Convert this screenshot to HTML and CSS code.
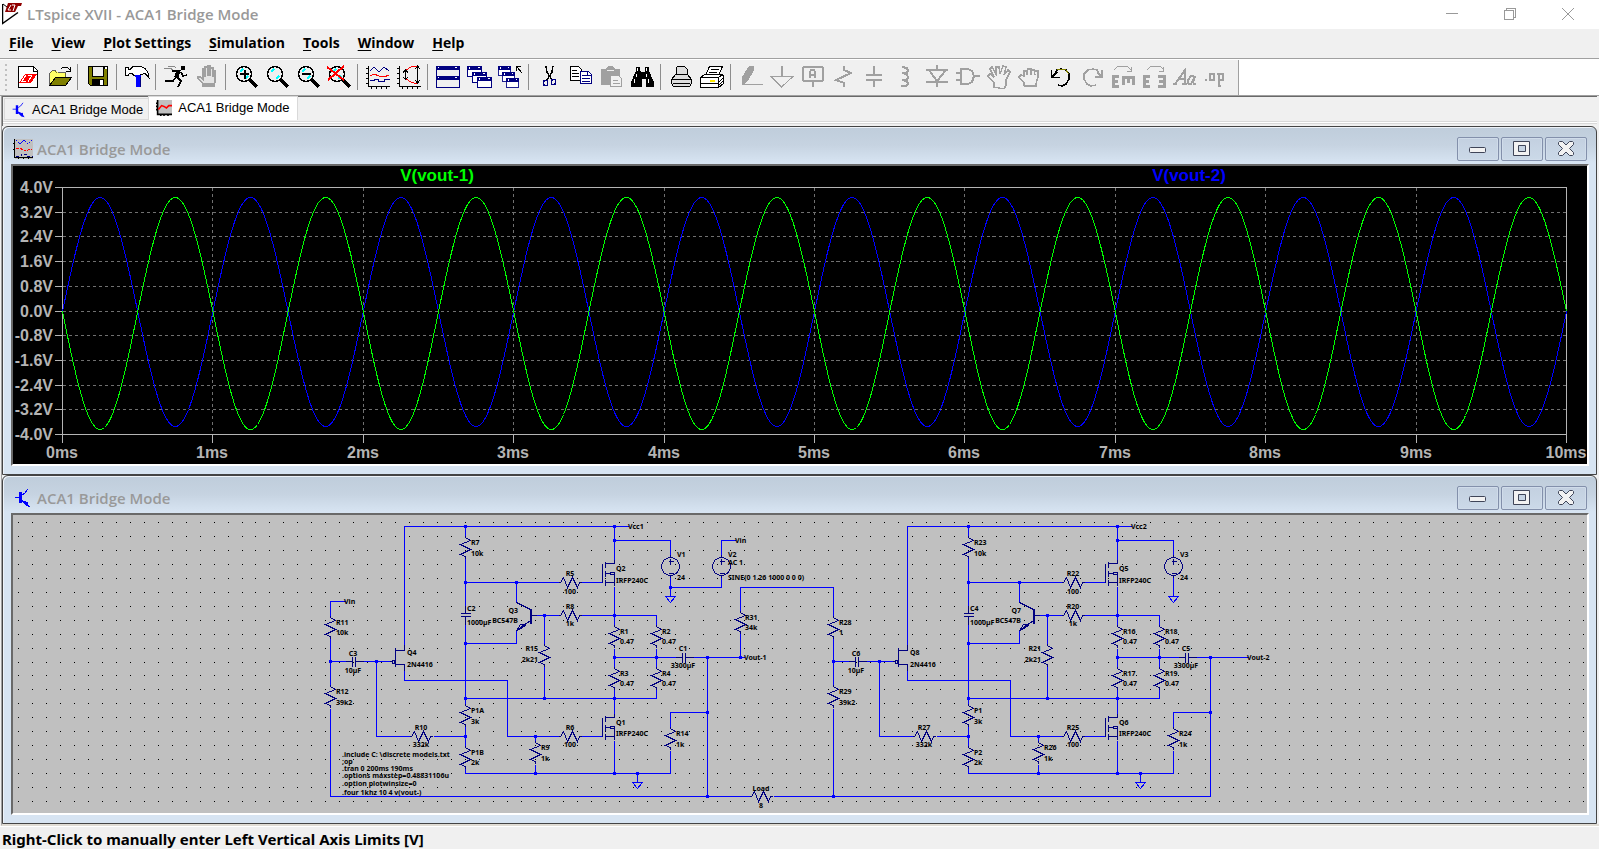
FILE: index.html
```html
<!DOCTYPE html>
<html lang="en">
<head>
<meta charset="utf-8">
<title>LTspice XVII - ACA1 Bridge Mode</title>
<link rel="stylesheet" href="styles.css">
</head>
<body>
<svg class="defs" aria-hidden="true">
  <symbol id="i-transistor" viewBox="0 0 20 20"><path d="M2 9h5M9 7l3-2 3-4" fill="none" stroke="#00f" stroke-width="1"/><path d="M6 4h3v11H6zM9 12l5 2 1-1v3l2 3-4-1-4-4z" fill="#00f"/></symbol>
  <symbol id="i-wave" viewBox="0 0 20 20"><path fill="#c0c0c0" d="M2 0h18v18H2z"/><path d="M2 0v18H20M0 4h2M0 8h2M0 12h2M6 18v2M10 18v2M15 18v2" fill="none" stroke="#000" stroke-width="2"/><path d="M3 12l4-5 3 1 3 2 3-3h4" fill="none" stroke="#f00" stroke-width="2"/></symbol>
  <symbol id="i-plot" viewBox="0 0 20 20"><path fill="#c0c0c0" d="M2 0h18v20H2z"/><path d="M1.500 0v18.500H20M0 4.500h2M0 10.500h2M5.500 18v2M10.500 18v2M15.500 18v2" fill="none" stroke="#000"/><path d="M3 1l4 4 4-4 4 4 4-4" fill="none" stroke="#00f" stroke-dasharray="2 1"/><path d="M3 10l3-1 5 2 4 0 4-1" fill="none" stroke="#f00" stroke-dasharray="3 1"/><path d="M3 17h5v-2h5v2h7" fill="none" stroke="#000080" stroke-dasharray="3 2"/></symbol>
  <symbol id="i-lens" viewBox="0 0 25 24"><circle cx="10" cy="9" r="7.500" fill="#f0f0f0" stroke="#000" stroke-width="1.500"/><path d="M6 7l3-3M11 14l3-3" stroke="#0ff" stroke-width="2" fill="none"/><path d="M15 14l8 8" stroke="#000" stroke-width="4"/></symbol>
  <symbol id="i-win" viewBox="0 0 15 11"><path d="M.5.500h14v10H.500z" fill="#fff" stroke="#000080"/><path d="M0 0h15v4H0z" fill="#000080"/><path d="M2 1h1v2H2zM11 1h2v1h-2z" fill="#fff"/></symbol>
  <symbol id="b-min" viewBox="0 0 18 16"><rect x=".5" y="6.500" width="16" height="5" rx="1" fill="#f2f2f2" stroke="#3f4558"/></symbol>
  <symbol id="b-max" viewBox="0 0 18 16"><path d="M.500.500h16v14h-16zM5.500 4.500v6h7v-6z" fill="#f2f2f2" fill-rule="evenodd" stroke="#3f4558"/></symbol>
  <symbol id="b-close" viewBox="0 0 18 16"><path d="M2.500.500H5.500L9 4l3.500-3.500h3l1 1v2L12.500 7.500l4 4v2l-1 1h-3L9 11l-3.500 3.500h-3l-1-1v-2l4-4-4-4v-2z" fill="#f2f2f2" stroke="#3f4558"/></symbol>
</svg>

<header class="titlebar">
  <svg class="logo" viewBox="0 0 20 22"><path d="M.5 1v19.500L16 9.500" fill="none" stroke="#000" stroke-width="1.500"/><path d="M1 1l4 3" stroke="#000"/><path d="M6 0h14l-1 3h-3l-3 6H3z" fill="#900000"/><path d="M9 2L6 7h3M10 2h3l-2 6" stroke="#fff" fill="none" stroke-width="1"/></svg>
  <h1 class="app-title">LTspice XVII - ACA1 Bridge Mode</h1>
  <div class="sys">
    <button type="button" aria-label="Minimize"><svg viewBox="0 0 12 12"><path d="M0 5.500h12"/></svg></button>
    <button type="button" aria-label="Restore"><svg viewBox="0 0 12 12"><path d="M.5 2.500h9v9h-9zM2.500 2.500v-2h9v9h-2"/></svg></button>
    <button type="button" aria-label="Close"><svg viewBox="0 0 12 12"><path d="M0 0l12 12M12 0L0 12" shape-rendering="auto"/></svg></button>
  </div>
</header>

<nav class="menu">
  <button type="button"><u>F</u>ile</button><button type="button"><u>V</u>iew</button><button type="button"><u>P</u>lot Settings</button><button type="button"><u>S</u>imulation</button><button type="button"><u>T</u>ools</button><button type="button"><u>W</u>indow</button><button type="button"><u>H</u>elp</button>
</nav>

<div class="rebar">
<div class="toolbar" role="toolbar" aria-label="Main">
  <span class="grip"></span>
  <button type="button" aria-label="New schematic"><svg viewBox="0 0 25 24"><path d="M2.500 1.500H17.500L21.500 5.500V22.500H2.500z" fill="#fff" stroke="#000"/><path d="M17.500 1v5h4" fill="none" stroke="#000"/><path d="M3 18l6-9h12l-6 9z" fill="#f00"/><path d="M10 10l-4 6h4M12 10h4l-4 7" stroke="#fff" fill="none"/></svg></button>
  <button type="button" aria-label="Open"><svg viewBox="0 0 25 24"><path d="M2.500 20V7.500l2-2h4l2 2h8v5H9l-6 8z" fill="#ff6" stroke="#000" stroke-width=".6"/><path d="M2.500 20.500l6-8h16l-6 8z" fill="#808000" stroke="#000"/><path d="M14 4l2-2h4l3 3M23.500 2v4.500H19" fill="none" stroke="#000"/></svg></button>
  <span class="sep"></span>
  <button type="button" aria-label="Save"><svg viewBox="0 0 25 24"><path d="M2 1h20v20H4l-2-2z" fill="#000"/><path d="M3 2h3v10h12V4h3v16H4l-1-1z" fill="#808000"/><path d="M7 2h10v9H7z" fill="#efefef"/><path d="M6 14h12v7H6z" fill="#000"/><path d="M14 15h3v5h-3zM19 2h2v2h-2z" fill="#fff"/></svg></button>
  <span class="sep"></span>
  <button type="button" aria-label="Control panel"><svg viewBox="0 0 25 24"><path d="M.5 2.500h2.500v2h2l3-3h8l4 2 3 4 1 5-4-4-4 1-1 1H9L7 8.500H4.500L3 10.500H.500z" fill="#fff" stroke="#000"/><path d="M10 10h6v2h-1v10h-4V12h-1z" fill="#00f"/><path d="M15.500 12v10" stroke="#000080"/></svg></button>
  <span class="sep"></span>
  <button type="button" aria-label="Run"><svg viewBox="0 0 25 24"><path d="M17 1h4v4h-4z" fill="#000"/><path d="M15 7l-3 5-3 4H1M13 12l4 4-3 6M8 6h6M17 7l2 4 4-1" fill="none" stroke="#000" stroke-width="1.500"/><path d="M12 5h5l-2 6-2 2-3-1 2-5z" fill="#000"/><path d="M0 3h6l3 2M4 1h6l2 2" fill="none" stroke="#888"/></svg></button>
  <button type="button" aria-label="Halt" disabled><svg viewBox="0 0 25 24"><path d="M8 21v-3l-5-4v-2h3l2 2V4h2v8V2h3v9V1h2v10V3h3v9V6h2v12l-2 3z" fill="#e4e4e4" stroke="#a0a0a0" stroke-width="1.400"/><path d="M8 18h12v4H8z" fill="#a0a0a0"/></svg></button>
  <span class="sep"></span>
  <button type="button" aria-label="Zoom in"><svg viewBox="0 0 25 24"><use href="#i-lens"/><path d="M6 9h9M10.500 5v9" stroke="#000" stroke-width="2"/></svg></button>
  <button type="button" aria-label="Pan"><svg viewBox="0 0 25 24"><use href="#i-lens"/></svg></button>
  <button type="button" aria-label="Zoom out"><svg viewBox="0 0 25 24"><use href="#i-lens"/><path d="M6 9h9" stroke="#000" stroke-width="2"/></svg></button>
  <button type="button" aria-label="Zoom to fit"><svg viewBox="0 0 25 24"><use href="#i-lens"/><path d="M0 2l17 13M1 15L17 1" stroke="#f00" stroke-width="2"/></svg></button>
  <span class="sep"></span>
  <button type="button" aria-label="Autorange"><svg viewBox="0 0 25 24"><path d="M2.500 1v20.500H24M0 3.500h2M0 8.500h2M0 13.500h2M0 18.500h2M5.500 22v2M10.500 22v2M15.500 22v2M20.500 22v2" stroke="#000" fill="none"/><path d="M4 6l4-4 5 5 5-5 5 4" stroke="#000080" fill="none"/><path d="M4 11l4-2 5 2 5 1 5-2" stroke="#f00" fill="none"/><path d="M4 15.500h4v-1h4v2h6v-2h6" stroke="#000080" fill="none"/></svg></button>
  <button type="button" aria-label="Setup axis"><svg viewBox="0 0 25 24"><path d="M2.500 1v20.500H24M0 3.500h2M0 8.500h2M0 13.500h2M0 18.500h2M5.500 22v2M10.500 22v2M15.500 22v2M20.500 22v2M8.500 6v8M6 7.500l2.500-2.500L11 7.500M6 12l2.500 2.500L11 12M20.500 2v16M18 4l2.500-3L23 4M18 15l2.500 3 2.500-3" stroke="#000" fill="none"/><path d="M9 5l5-3 6-1M9 14l5 3 6 2" stroke="#f00" fill="none"/></svg></button>
  <span class="sep"></span>
  <button type="button" aria-label="Tile windows"><svg viewBox="0 0 25 24"><path d="M.500 1.500h23v21H.500z" fill="#f0f0f0" stroke="#000080"/><path d="M0 1h24v4H0zM0 11h24v4H0z" fill="#000080"/><path d="M2 2h1v1H2zM19 2h2v1h-2zM2 12h1v1H2zM19 12h2v1h-2z" fill="#fff"/></svg></button>
  <button type="button" aria-label="Cascade windows"><svg viewBox="0 0 25 24"><use href="#i-win" x="0" y="1" width="15" height="11"/><use href="#i-win" x="5" y="7" width="15" height="11"/><use href="#i-win" x="10" y="12" width="15" height="11"/></svg></button>
  <button type="button" aria-label="Close all windows"><svg viewBox="0 0 25 24"><use href="#i-win" x="0" y="1" width="13" height="10"/><use href="#i-win" x="4" y="7" width="13" height="10"/><use href="#i-win" x="8" y="13" width="13" height="10"/><path d="M18.500 6V1.500H23M19 2l5 6" stroke="#000" fill="none"/></svg></button>
  <span class="sep"></span>
  <button type="button" aria-label="Cut"><svg viewBox="0 0 25 24"><path d="M9 1l1 6 5 8M16 1l-1 6-5 8" stroke="#000" stroke-width="1.500" fill="none"/><path d="M7.500 15.500h3v5h-3l-1-1v-3zM15.500 14.500h3v4l-1 1h-3v-4z" fill="none" stroke="#000080" stroke-width="1.500"/></svg></button>
  <button type="button" aria-label="Copy"><svg viewBox="0 0 25 24"><path d="M2.500 1.500h8l3 3v11h-11z" fill="#fff" stroke="#000"/><path d="M4 5h5M4 8h7M4 11h7" stroke="#000"/><path d="M12.500 6.500h8l3 3v9h-11z" fill="#fff" stroke="#000080"/><path d="M14 10h5M14 13h8M14 16h8M19.500 7v3h4" stroke="#000080" fill="none"/></svg></button>
  <button type="button" aria-label="Paste" disabled><svg viewBox="0 0 25 24"><path d="M2 4h5l2-3h5l2 3h5v16H2z" fill="#a0a0a0"/><path d="M8 5h7" stroke="#eee"/><path d="M11.500 10.500h8l3 3v8h-11z" fill="#f0f0f0" stroke="#a0a0a0"/><path d="M14 15h5M14 18h7" stroke="#a0a0a0"/></svg></button>
  <button type="button" aria-label="Find"><svg viewBox="0 0 25 24"><path d="M6 2h4v4l1 1h3l1-1V2h4v4l5 11v5h-8v-8h-4v8H1v-5L6 6z" fill="#000"/><path d="M7 3h1v3H7zM16 3h1v3h-1zM6 9h1v3H6zM4 14h1v4H4zM18 14h1v4h-1zM16 9h1v3h-1z" fill="#fff"/></svg></button>
  <span class="sep"></span>
  <button type="button" aria-label="Print setup"><svg viewBox="0 0 25 24"><path d="M7.500 10V2.500l1-1h7l3 3V10" fill="#ddd" stroke="#000"/><path d="M2.500 14.500l4-5h12l4 5v4l-2 3h-16l-2-3z" fill="#ddd" stroke="#000"/><path d="M3 14.500h19M4 18.500h17" stroke="#000"/></svg></button>
  <button type="button" aria-label="Print"><svg viewBox="0 0 25 24"><path d="M5.500 10l4-8.500h13l-4 8.500z" fill="#fff" stroke="#000"/><path d="M11 4h8M9 7h8" stroke="#000"/><path d="M.500 12.500l4-3h18l1 2v7l-5 4H.500z" fill="#fff" stroke="#000"/><path d="M.500 12.500h18l5-4M18.500 12v10M0 18.500h18M19 17l5-5M19 20l5-5" stroke="#000" fill="none"/><path d="M10 15h5v2h-5z" fill="#ffea00"/></svg></button>
  <span class="sep"></span>
  <button type="button" aria-label="Wire" disabled><svg viewBox="0 0 25 24"><path d="M10 1h5v4L9 16l-4 3-2 1V12z" fill="#a0a0a0"/><path d="M3 19.500h21" stroke="#a0a0a0"/></svg></button>
  <button type="button" aria-label="Ground" disabled><svg class="dim" viewBox="0 0 25 24"><path d="M11.500 1v10" stroke-width="2"/><path d="M1 11.500h22L11.500 22z"/></svg></button>
  <button type="button" aria-label="Label net" disabled><svg class="dim bold" viewBox="0 0 25 24"><path d="M2 3l1-1h18l1 1v12l-1 1H3l-1-1zM12 16v6M9 13V7l1-2h3l1 2v6M9 10h5"/></svg></button>
  <button type="button" aria-label="Resistor" disabled><svg class="dim bold" viewBox="0 0 25 24"><path d="M12 1v4l7 3-15 7 8 3v4"/></svg></button>
  <button type="button" aria-label="Capacitor" disabled><svg class="dim bold" viewBox="0 0 25 24"><path d="M11 1v9M3 10h16M3 15h16M11 15v7"/></svg></button>
  <button type="button" aria-label="Inductor" disabled><svg class="dim bold" viewBox="0 0 25 24"><path d="M8 2l5 1 1 3-2 2H8M8 8l5 1 1 4-2 2H8M8 15l5 1 1 3-2 2H7"/></svg></button>
  <button type="button" aria-label="Diode" disabled><svg class="dim bold" viewBox="0 0 25 24"><path d="M12 0v5M1 5h22M4 5l8 11 9-11M1 17h22M12 17v5"/></svg></button>
  <button type="button" aria-label="Component" disabled><svg class="dim bold" viewBox="0 0 25 24"><path d="M5 4h7l4 2 2 5-2 6-4 2H5zM0 8h5M0 15h5M18 11h6"/></svg></button>
  <button type="button" aria-label="Move" disabled><svg class="dim" viewBox="0 0 25 24"><path stroke-width="1.500" d="M7 22v-4l-6-7 2-2 4 3-4-8 2-2 4 7V2h3l1 7 3-8 3 1-2 8 4-5 2 2-4 8v5l-2 4z"/></svg></button>
  <button type="button" aria-label="Drag" disabled><svg class="dim" viewBox="0 0 25 24"><path stroke-width="1.500" d="M6 21v-3l-5-6 2-2 3 1V6h3v4M9 6l1-2h3v6M13 5h3l1 5M17 6h3v6l-2 7v2H6"/></svg></button>
  <button type="button" aria-label="Undo"><svg viewBox="0 0 25 24"><path d="M5 10l3-5 4-1 5 1 3 4v5l-3 5-4 2-4-1" fill="none" stroke="#000" stroke-width="1.500"/><path d="M8 5l4-1 5 1 3 4" fill="none" stroke="#808000"/><path d="M2.500 5v8M3 12.500h8M3 12l5-5" fill="none" stroke="#000" stroke-width="1.500"/></svg></button>
  <button type="button" aria-label="Redo" disabled><svg class="dim" viewBox="0 0 25 24"><path stroke-width="1.500" d="M20 10l-3-5-4-1-5 1-4 4v5l3 5 4 2 5-1M22 5v7h-7M22 12l-5-4"/></svg></button>
  <button type="button" aria-label="Rotate" disabled><svg class="dim" viewBox="0 0 25 24"><path d="M3 5l4-4h9l4 4M20.500 2v4H16"/><path stroke-width="3" d="M8 11.500H2v10h6M2 16h5M11 12.500h13M12 13v7M17 13v5M22.500 13v7"/></svg></button>
  <button type="button" aria-label="Mirror" disabled><svg class="dim" viewBox="0 0 25 24"><path d="M5 5l4-4h9l4 4M21.500 2v4H17"/><path stroke-width="3" d="M8 11.500H2v10h6M2 16h5M16 11.500h6v10h-6M17 16h5"/></svg></button>
  <button type="button" aria-label="Text" disabled><svg class="dim bold" viewBox="0 0 25 24"><path d="M0 19h4M2 19L12 5v14M5 14h7M9 19h5M21 11h-3l-3 4v3l1 1h2l4-8-2 6 1 2h2"/></svg></button>
  <button type="button" aria-label="SPICE directive" disabled><svg class="dim bold" viewBox="0 0 25 24"><path d="M1 15h2M6 9h4v6H6zM13 9h2v13M15 9h4v6h-4M14 21h3"/></svg></button>
</div>
</div>

<div class="workspace">
  <div class="tabs" role="tablist">
    <button type="button" role="tab" class="tab"><svg class="tab-icon" viewBox="0 0 20 20"><use href="#i-transistor"/></svg>ACA1 Bridge Mode</button>
    <button type="button" role="tab" class="tab active" aria-selected="true"><svg class="tab-icon" viewBox="0 0 20 20"><use href="#i-wave"/></svg>ACA1 Bridge Mode</button>
  </div>

  <section class="child">
    <div class="child-title">
      <svg class="child-icon" viewBox="0 0 20 20"><use href="#i-plot"/></svg>
      <h2>ACA1 Bridge Mode</h2>
      <button type="button" aria-label="Minimize"><svg viewBox="0 0 18 16"><use href="#b-min"/></svg></button>
      <button type="button" aria-label="Maximize"><svg viewBox="0 0 18 16"><use href="#b-max"/></svg></button>
      <button type="button" aria-label="Close"><svg viewBox="0 0 18 16"><use href="#b-close"/></svg></button>
    </div>
    <div class="client"><svg id="plot" class="plot" viewBox="13 166 1574 298"></svg></div>
  </section>

  <section class="child">
    <div class="child-title">
      <svg class="child-icon" viewBox="0 0 20 20"><use href="#i-transistor"/></svg>
      <h2>ACA1 Bridge Mode</h2>
      <button type="button" aria-label="Minimize"><svg viewBox="0 0 18 16"><use href="#b-min"/></svg></button>
      <button type="button" aria-label="Maximize"><svg viewBox="0 0 18 16"><use href="#b-max"/></svg></button>
      <button type="button" aria-label="Close"><svg viewBox="0 0 18 16"><use href="#b-close"/></svg></button>
    </div>
    <div class="client"><svg id="schematic" class="schematic" viewBox="13 515 1574 298"></svg></div>
  </section>
</div>

<footer class="status">Right-Click to manually enter Left Vertical Axis Limits [V]</footer>
<script src="app.js"></script>
</body>
</html>
```
FILE: styles.css
```css
* { box-sizing: border-box; }
body {
  margin: 0;
  min-height: 100vh;
  display: flex;
  flex-direction: column;
  background: #f0f0f0;
  color: #000;
  font: 600 15px/20px "Open Sans", "Noto Sans", sans-serif;
  overflow: hidden;
}
button {
  margin: 0;
  padding: 0;
  border: 0;
  background: none;
  color: inherit;
  font: inherit;
}
svg { display: block; }
.defs { display: none; }

.titlebar {
  display: flex;
  align-items: center;
  height: 29px;
  padding: 0 2px 1px;
  background: #fff;
  color: #999;
}
.logo { width: 20px; height: 22px; }
.app-title { flex: 1; margin: 0 0 0 5px; font: inherit; }
.sys { display: flex; }
.sys button { width: 58px; height: 28px; display: flex; align-items: center; justify-content: center; }
.sys svg { width: 12px; height: 12px; fill: none; stroke: #999; shape-rendering: crispEdges; }

.menu {
  display: flex;
  height: 30px;
  padding-bottom: 1px;
  border-bottom: 1px solid #a0a0a0;
  font-size: 14px;
  font-weight: 700;
}
.menu button { padding: 0 9px; }
.menu u { text-underline-offset: 2px; }

.rebar {
  padding-top: 1px;
  background: #fff;
  border-bottom: 1px solid #a0a0a0;
  display: flex;
}
.toolbar {
  display: flex;
  align-items: center;
  height: 35px;
  padding: 0 6px 1px 0;
  background: #f0f0f0;
  border-right: 1px solid #a0a0a0;
}
.grip {
  width: 2px;
  height: 27px;
  margin: 0 6px 0 5px;
  background: repeating-linear-gradient(#c0c0c0 0 2px, transparent 2px 5px);
}
.sep {
  width: 8px;
  height: 26px;
  background: linear-gradient(#8d8d8d, #8d8d8d) 2px 0 / 1px 100% no-repeat;
}
.toolbar button { width: 31px; height: 30px; display: grid; place-items: center; }
.toolbar svg { width: 25px; height: 24px; shape-rendering: crispEdges; }
.dim { fill: none; stroke: #a0a0a0; stroke-width: 1px; }
.dim.bold { stroke-width: 2px; }

.workspace {
  margin: 0 0 0 1px;
  border-left: 1px solid #a0a0a0;
  padding-right: 2px;
  border-bottom: 2px solid #e0dcd4;
}
.tabs {
  display: flex;
  align-items: flex-end;
  height: 30px;
  padding: 0 0 6px 1px;
  border-top: 1px solid #696969;
  border-left: 1px solid #696969;
  background: linear-gradient(#d9d9d9, #d9d9d9) 0 24px / 100% 1px no-repeat, linear-gradient(#fff, #fff) 0 25px / 100% 1px no-repeat, linear-gradient(#d9d9d9, #d9d9d9) 0 26px / 100% 1px no-repeat;
}
.tab {
  display: flex;
  align-items: center;
  gap: 5px;
  height: 22px;
  padding: 1px 5px 0 6px;
  border: 1px solid #d9d9d9;
  border-right: 0;
  font: 13px/18px "Liberation Sans", Arial, sans-serif;
}
.tab.active {
  height: 24px;
  padding: 0 7px 2px;
  gap: 6px;
  background: #fff;
  border-bottom: 0;
  border-right: 1px solid #d9d9d9;
}
.tab-icon { width: 16px; height: 16px; }

.child {
  border: 1px solid #444;
  border-radius: 6px 6px 0 0;
  padding: 0 7px 8px 8px;
  background: linear-gradient(#bfcddb, #c6d3e1 18px, #d7e4f2 36px);
  box-shadow: inset 1px 1px 0 #eef3f9;
}
.child-title {
  display: flex;
  align-items: center;
  gap: 2px;
  height: 37px;
  padding: 7px 2px 0;
  color: #999;
}
.child-icon { width: 20px; height: 20px; shape-rendering: crispEdges; }
.child-title h2 { flex: 1; margin: 0 0 0 2px; font: inherit; }
.child-title button {
  width: 42px;
  height: 24px;
  display: grid;
  place-items: center;
  border: 1px solid #8390ab;
  border-radius: 2px;
  background: linear-gradient(#c3d0e0, #cbd9e8);
  box-shadow: inset 0 0 0 1px #d0dcea;
}
.child-title button svg { width: 18px; height: 16px; }
.client {
  border: 2px solid #fff;
  border-top-color: #696969;
  border-left-color: #696969;
}
.client > svg { width: 100%; height: auto; }

.plot { background: #000; font: bold 16px "Liberation Sans", Arial, sans-serif; }
.plot path { fill: none; shape-rendering: crispEdges; }
.plot text { fill: #b4b4b4; }
.plot .axis { stroke: #b4b4b4; }
.plot .grid { stroke: #707070; stroke-dasharray: 3 3; }
.plot .green { stroke: #0f0; }
.plot .blue { stroke: #00f; }
.plot .name { font-size: 17px; }
.plot .name.green { fill: #0f0; stroke: none; }
.plot .name.blue { fill: #00f; stroke: none; }

.schematic { background: #c0c0c0; font: bold 7px "Noto Sans", "Open Sans", sans-serif; }
.schematic path { fill: none; shape-rendering: crispEdges; }
.schematic path.wire { stroke: #00f; }
.schematic path.part { stroke: #000080; }
.schematic path.node { fill: #00f; }
.schematic path.dots { fill: #000; }
.middle { text-anchor: middle; }
.end { text-anchor: end; }

.status {
  height: 23px;
  padding: 3px 2px 0;
  border-top: 1px solid #fff;
  font: 700 15px/18px "Noto Sans", "Open Sans", sans-serif;
  white-space: nowrap;
}
```
FILE: app.js
```js
const NS = "http://www.w3.org/2000/svg";

function add(parent, tag, attrs, text) {
  const el = document.createElementNS(NS, tag);
  for (const key in attrs) el.setAttribute(key, attrs[key]);
  if (text !== undefined) el.textContent = text;
  parent.appendChild(el);
  return el;
}

/* ---- Waveform viewer ---- */
function drawPlot() {
  const svg = document.getElementById("plot");
  const L = 62, R = 1566, T = 187, B = 434, ZERO = 311;
  const lines = add(svg, "g", { transform: "translate(.5 .5)" });
  let grid = "", axis = `M${L} ${T}H${R}V${B}H${L}Z`;
  for (let i = 0; i <= 10; i++) {
    const x = Math.round(L + (R - L) * i / 10);
    const y = Math.round(T + (B - T) * i / 10);
    if (i > 0 && i < 10) grid += `M${x} ${T}V${B}M${L} ${y}H${R}`;
    axis += `M${x} ${B}v8M${L} ${y}h-8`;
    add(svg, "text", { x: x, y: 458, class: "middle" }, i + "ms");
    add(svg, "text", { x: 53, y: y + 6, class: "end" }, (4 - 0.8 * i).toFixed(1).replace("-0.0", "0.0") + "V");
  }
  add(lines, "path", { class: "grid", d: grid });
  add(lines, "path", { class: "axis", d: axis });

  function trace(cls, sign, up, down) {
    let d = "";
    for (let x = L; x <= R; x++) {
      const v = sign * Math.sin((x - L) / (R - L) * 20 * Math.PI);
      d += (d ? "L" : "M") + x + " " + (ZERO - v * (v > 0 ? up : down)).toFixed(1);
    }
    add(lines, "path", { class: cls, d: d });
  }
  trace("blue", 1, 114, 115);
  trace("green", -1, 114, 118);
  add(svg, "text", { x: 437, y: 181, class: "name green middle" }, "V(vout-1)");
  add(svg, "text", { x: 1189, y: 181, class: "name blue middle" }, "V(vout-2)");
}

/* ---- Part outlines ---- */
const resV = (x, y) => `M${x} ${y}v2l5 3-10 4 10 5-10 5 5 2v2`;
const resH = (x, y) => `M${x} ${y}h2l3-5 4 10 5-10 5 10 2-5h2`;
const capV = (x, y) => `M${x} ${y}v8m-5 0h10m-10 3h10m-5 0v8`;
const capH = (x, y) => `M${x} ${y}h7m0-5v10m3-10v10m0-5h8`;
const ground = (x, y) => `M${x} ${y}v9m-5 0h10l-5 6-5-6`;
const source = (x, y) => `M${x} ${y}v2m0 19v2m-9-11a9 9 0 1 0 18 0a9 9 0 1 0-18 0M${x - 2} ${y + 7}h5m-3-3v6M${x - 2} ${y + 19}h5`;
const mosfet = (x, y) => `M${x} ${y}v4h-9M${x - 12} ${y + 4}v19M${x - 9} ${y + 2}v6m0 3v6m0 3v6M${x - 9} ${y + 14}h4l2-1h3v13M${x - 5} ${y + 14}l2 1h2M${x - 9} ${y + 23}h9`;

const channelWires = `M404 644V526H628M404 670V680H507V736H558M581 736H602
M465 526V535M465 558V605M465 624V703M465 726V745M465 768V773H670V750M670 726V712H707
M465 582H558M581 582H602M516 582V602M516 630V643H465
M330 638V684M330 661H345M363 661H389M376 661V736H409M433 736H465
M535 615H558M581 615H656V624M656 648V666M656 689V698H465
M544 615V643M544 666V698M614 526V559M614 586V624M614 648V666M614 689V713M614 740V773
M614 540H670V554M614 657H675M693 657H707M535 736V740M535 764V773`;

const channelParts = resV(465, 535) + resV(330, 615) + resV(330, 684) + resV(544, 643) +
  resV(614, 624) + resV(656, 624) + resV(614, 666) + resV(656, 666) + resV(465, 703) +
  resV(465, 745) + resV(535, 740) + resV(670, 726) + resH(558, 582) + resH(558, 615) +
  resH(558, 736) + resH(409, 736) + capV(465, 605) + capH(345, 661) + capH(675, 657) +
  mosfet(614, 559) + mosfet(614, 713) + source(670, 554) +
  "M404 644V650H395M395 647V666M395 664H404V670M389 661h3m0-1h2v3h-2z" +
  "M530 608V623M531 608V623M531 615H536M530 609L516 602M530 620L516 630M517 629l3-5 5 1-8 5 6-6";

const channelNodes = [[465, 526], [614, 526], [614, 540], [465, 582], [516, 582], [544, 615],
  [614, 615], [465, 643], [376, 661], [330, 661], [614, 657], [656, 657], [707, 657],
  [465, 698], [544, 698], [614, 698], [465, 736], [535, 736], [707, 712], [535, 773],
  [614, 773], [637, 773]];

/* x, y of the text baseline, alignment, name in each channel */
const channelLabels = [
  [628, 529, "", "Vcc1", "Vcc2"],
  [471, 545, "", "R7", "R23"], [471, 556, "", "10k", "10k"],
  [570, 576, "middle", "R5", "R22"], [570, 594, "middle", "100", "100"],
  [570, 609, "middle", "R8", "R20"], [570, 626, "middle", "1k", "1k"],
  [616, 571, "", "Q2", "Q5"], [616, 583, "", "IRFP240C", "IRFP240C"],
  [677, 557, "", "V1", "V3"], [677, 580, "", "24", "24"],
  [336, 625, "", "R11", "R28"], [336, 635, "", "10k", "1"],
  [353, 656, "middle", "C3", "C6"], [353, 673, "middle", "10µF", "10µF"],
  [407, 655, "", "Q4", "Q8"], [407, 667, "", "2N4416", "2N4416"],
  [467, 611, "", "C2", "C4"], [467, 625, "", "1000µF", "1000µF"],
  [518, 613, "end", "Q3", "Q7"], [518, 623, "end", "BC547B", "BC547B"],
  [538, 651, "end", "R15", "R21"], [538, 662, "end", "2k21", "2k21"],
  [620, 634, "", "R1", "R16"], [620, 644, "", "0.47", "0.47"],
  [662, 634, "", "R2", "R18"], [662, 644, "", "0.47", "0.47"],
  [620, 676, "", "R3", "R17"], [620, 686, "", "0.47", "0.47"],
  [662, 676, "", "R4", "R19"], [662, 686, "", "0.47", "0.47"],
  [683, 651, "middle", "C1", "C5"], [683, 668, "middle", "3300µF", "3300µF"],
  [336, 694, "", "R12", "R29"], [336, 705, "", "39k2", "39k2"],
  [471, 713, "", "P1A", "P1"], [471, 724, "", "3k", "3k"],
  [471, 755, "", "P1B", "P2"], [471, 765, "", "2k", "2k"],
  [421, 730, "middle", "R10", "R27"], [421, 747, "middle", "332k", "332k"],
  [541, 750, "", "R9", "R26"], [541, 761, "", "1k", "1k"],
  [570, 730, "middle", "R6", "R25"], [570, 747, "middle", "100", "100"],
  [616, 725, "", "Q1", "Q6"], [616, 736, "", "IRFP240C", "IRFP240C"],
  [676, 736, "", "R14", "R24"], [676, 747, "", "1k", "1k"]
];

const sharedLabels = [
  [344, 604, "", "Vin"], [735, 543, "", "Vin"], [728, 557, "", "V2"], [728, 565, "", "AC 1"],
  [728, 580, "", "SINE(0 1.26 1000 0 0 0)"], [745, 620, "", "R31"], [745, 630, "", "34k"],
  [744, 660, "", "Vout-1"], [1247, 660, "", "Vout-2"],
  [761, 791, "middle", "Load"], [761, 808, "middle", "8"],
  [342, 757, "", ".include C: \\discrete models.txt"], [342, 764, "", ";op"],
  [342, 771, "", ".tran 0 200ms 190ms"], [342, 778, "", ".options maxstep=0.48831106u"],
  [342, 786, "", ".option plotwinsize=0"], [342, 795, "", ".four 1khz 10 4 v(vout-)"]
];

function drawSchematic() {
  const svg = document.getElementById("schematic");
  const PITCH = 503;
  let dots = "";
  for (let r = 0; r < 21; r++)
    for (let c = 0; c < 113; c++)
      dots += `M${Math.round(18 + c * 13.97)} ${Math.round(522 + r * 13.95)}h1v1h-1z`;
  add(svg, "path", { class: "dots", d: dots });

  const node = list => list.map(([x, y]) => `M${x - 1} ${y - 1}h3v3h-3z`).join("");
  [0, PITCH].forEach((dx, ch) => {
    const g = add(svg, "g", { transform: `translate(${dx + 0.5} .5)` });
    add(g, "path", { class: "wire", d: channelWires + ground(637, 773) });
    add(g, "path", { class: "part", d: channelParts });
    const n = add(svg, "g", { transform: `translate(${dx} 0)` });
    add(n, "path", { class: "node", d: node(channelNodes) });
    channelLabels.forEach(l => add(n, "text", { x: l[0], y: l[1], class: l[2] }, l[3 + ch]));
  });

  const g = add(svg, "g", { transform: "translate(.5 .5)" });
  add(g, "path", { class: "wire", d: "M345 601H330V615M330 708V796H749M773 796H1210V657M707 657V796M707 657H744M735 540H721V554M721 577V587H670V577M740 610V587H833V615M740 633V657M833 708V796M1210 657H1248M1173 577V587" + ground(670, 587) + ground(1173, 587) });
  add(g, "path", { class: "part", d: source(721, 554) + resV(740, 610) + resH(749, 796) });
  add(svg, "path", { class: "node", d: node([[670, 587], [740, 657], [707, 796], [833, 796]]) });
  sharedLabels.forEach(l => add(svg, "text", { x: l[0], y: l[1], class: l[2] }, l[3]));
}

drawPlot();
drawSchematic();
```
